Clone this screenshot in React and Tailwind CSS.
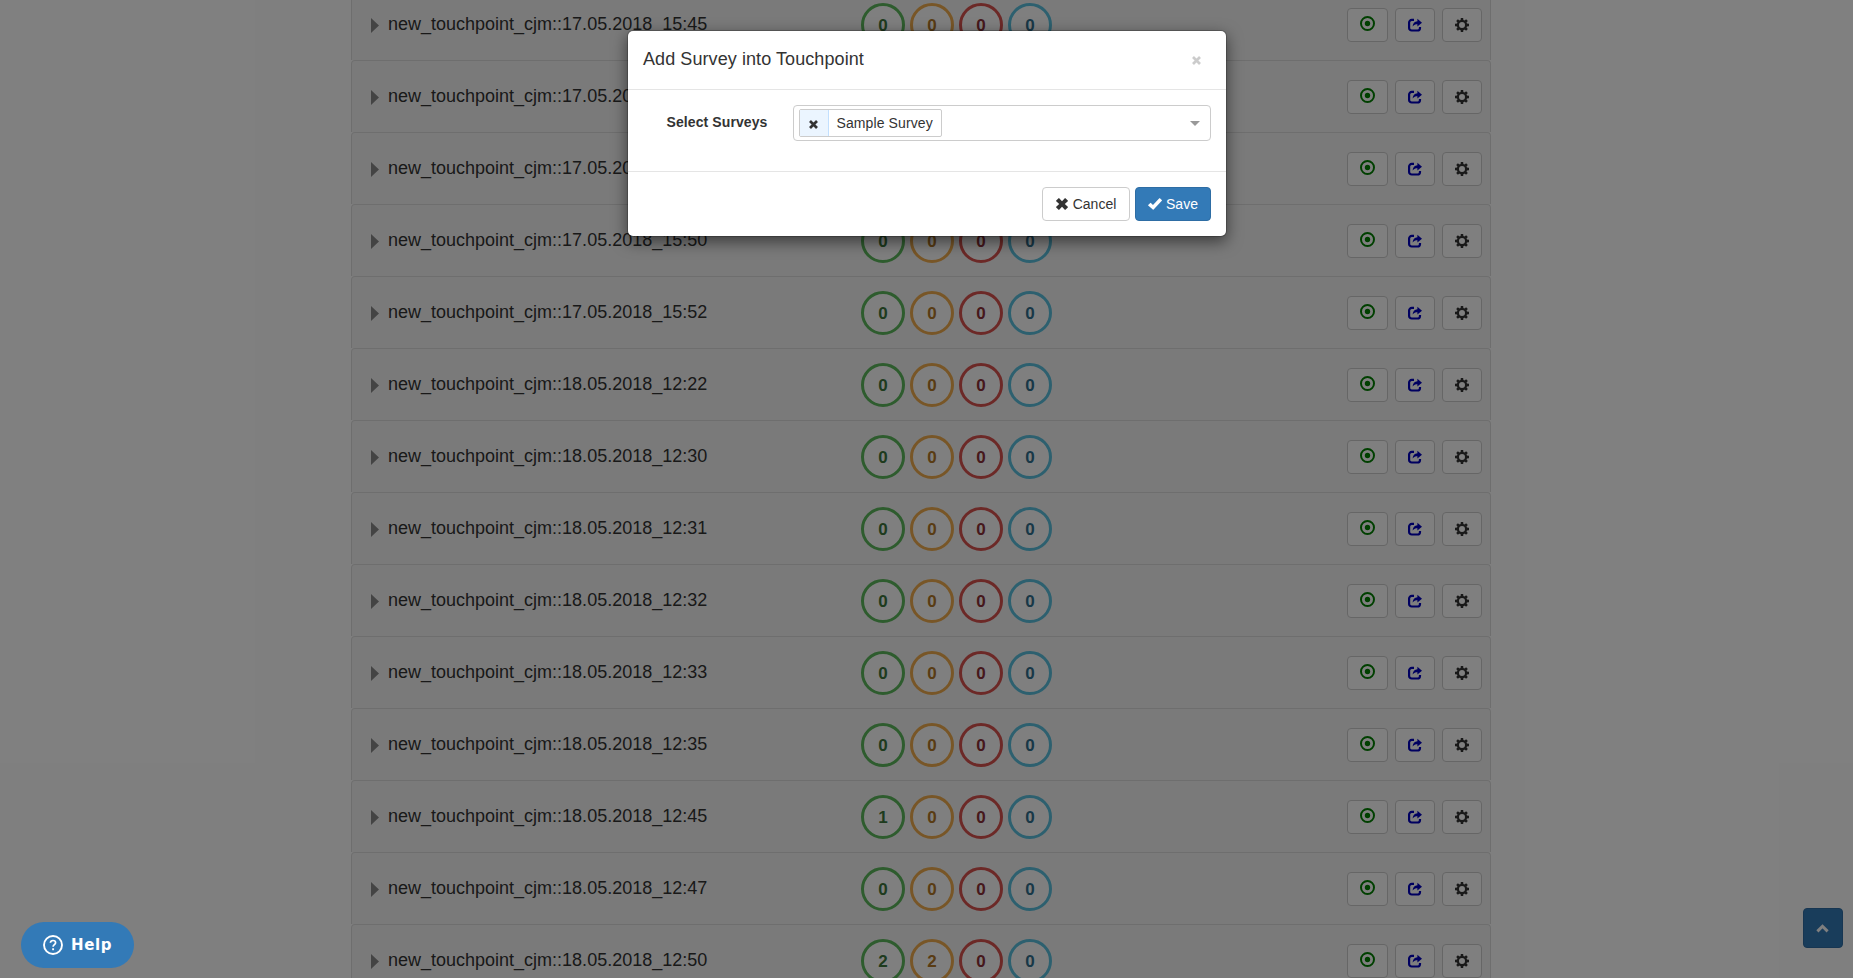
const rows = [
  ["new_touchpoint_cjm::17.05.2018_15:45", 0, 0],
  ["new_touchpoint_cjm::17.05.2018_15:46", 0, 0],
  ["new_touchpoint_cjm::17.05.2018_15:48", 0, 0],
  ["new_touchpoint_cjm::17.05.2018_15:50", 0, 0],
  ["new_touchpoint_cjm::17.05.2018_15:52", 0, 0],
  ["new_touchpoint_cjm::18.05.2018_12:22", 0, 0],
  ["new_touchpoint_cjm::18.05.2018_12:30", 0, 0],
  ["new_touchpoint_cjm::18.05.2018_12:31", 0, 0],
  ["new_touchpoint_cjm::18.05.2018_12:32", 0, 0],
  ["new_touchpoint_cjm::18.05.2018_12:33", 0, 0],
  ["new_touchpoint_cjm::18.05.2018_12:35", 0, 0],
  ["new_touchpoint_cjm::18.05.2018_12:45", 1, 0],
  ["new_touchpoint_cjm::18.05.2018_12:47", 0, 0],
  ["new_touchpoint_cjm::18.05.2018_12:50", 2, 2],
];

const badgeStyles = [
  "border-[#5cb85c] text-[#3c763d]",
  "border-[#f0ad4e] text-[#b27828]",
  "border-[#d9534f] text-[#8c3038]",
  "border-[#5bc0de] text-[#31708f]",
];

function TargetIcon() {
  return (
    <svg className="mb-[3px] size-[15px]" viewBox="0 0 15 15">
      <circle cx="7.5" cy="7.5" r="6.5" fill="none" stroke="#008000" strokeWidth="2" />
      <circle cx="7.5" cy="7.5" r="2.7" fill="#008000" />
    </svg>
  );
}

function ShareIcon() {
  return (
    <svg className="mb-px h-[14px] w-[14px]" viewBox="0 0 14 14">
      <path d="M6 1.900H3.700A2.600 2.600 0 0 0 1.100 4.500v5.400A2.600 2.600 0 0 0 3.700 12.500h5.700A2.600 2.600 0 0 0 12 9.900V9" fill="none" stroke="#0000c0" strokeWidth="2.200" />
      <path d="M9.400 .8 14 4.800 9.400 8.600V6.300C7.500 6.300 5.900 6.900 4.600 8.600 4.800 5.300 6.500 3.400 9.400 3.200Z" fill="#0000c0" />
    </svg>
  );
}

function CogIcon() {
  return (
    <svg className="mb-px size-[14px]" viewBox="-7 -7 14 14" fill="#333">
      <circle r="4.100" fill="none" stroke="#333" strokeWidth="2.200" />
      {[0, 45, 90, 135, 180, 225, 270, 315].map((a) => (
        <path key={a} d="M-1.400 -4.600-1.200 -7h2.400L1.400 -4.600Z" transform={`rotate(${a})`} />
      ))}
    </svg>
  );
}

function CrossIcon({ className }) {
  return (
    <svg className={className} viewBox="0 0 12 12" fill="currentColor">
      <path d="M.2 2.600 2.600.2Q2.900 0 3.200.2L6 3.200 8.800.2Q9.100 0 9.400.2l2.400 2.400q.3.300 0 .6L8.800 6l3 2.800q.3.300 0 .6L9.400 11.800q-.3.300-.6 0L6 8.800 3.200 11.800q-.3.300-.6 0L.2 9.400q-.3-.3 0-.6L3.200 6 .2 3.200q-.3-.3 0-.6Z" />
    </svg>
  );
}

function SmallCrossIcon({ className }) {
  return (
    <svg className={className} viewBox="0 0 9 9" fill="none" stroke="currentColor">
      <path d="M1 1 8 8M8 1 1 8" strokeWidth="2.700" />
    </svg>
  );
}

function CheckIcon() {
  return (
    <svg className="h-[12px] w-[14px]" viewBox="0 0 14 12" fill="white">
      <path d="M.2 7 2.300 4.900q.3-.3.600 0L5 6.900 11.300.3q.3-.3.600 0l1.900 1.800q.3.300 0 .6L5.600 11.500q-.4.400-.8 0L.2 7.600q-.3-.3 0-.6Z" />
    </svg>
  );
}

const toolButton =
  "flex h-[34px] items-center justify-center rounded-[4px] border border-[#ccc] bg-white";

function Row({ data }) {
  const [name, first, second] = data;
  return (
    <div className="flex h-[72px] shrink-0 items-start rounded-t-[4px] border-x border-t border-[#ddd] bg-[#f5f5f5]">
      <div className="flex w-[509px] items-start pl-[19px]">
        <svg className="mt-[29px] h-[15px] w-[8px]" viewBox="0 0 8 15">
          <path d="M0 0 8 7.500 0 15Z" fill="#888" />
        </svg>
        <span className="ml-[9px] mt-[25px] text-[18px] leading-[20px] text-[#333]">{name}</span>
      </div>
      <div className="mt-[14px] flex gap-[5px]">
        {[first, second, 0, 0].map((n, i) => (
          <span
            key={i}
            className={`flex size-[44px] items-center justify-center rounded-full border-[3px] bg-white pt-px text-[17px] font-bold leading-[20px] ${badgeStyles[i]}`}
          >
            {n}
          </span>
        ))}
      </div>
      <div className="ml-auto mr-[8px] mt-[19px] flex gap-[7px]">
        <button className={`w-[41px] ${toolButton}`}><TargetIcon /></button>
        <button className={`w-[40px] ${toolButton}`}><ShareIcon /></button>
        <button className={`w-[40px] ${toolButton}`}><CogIcon /></button>
      </div>
    </div>
  );
}

export default function App() {
  return (
    <div className="relative h-[978px] w-full overflow-hidden bg-white font-['Liberation_Sans',Arial,sans-serif] text-[14px] leading-[20px] text-[#333]">
      <main className="-mt-[12px] ml-[351px] flex w-[1140px] flex-col">
        {rows.map((r) => (
          <Row key={r[0]} data={r} />
        ))}
      </main>

      <button className="absolute bottom-[30px] right-[10px] flex size-[40px] items-center justify-center rounded-[4px] border border-[#2e6da4] bg-[#337ab7] pr-px">
        <svg className="h-[9px] w-[13px]" viewBox="0 0 13 9">
          <path d="M1.400 7.400 6.500 2.300l5.100 5.100" fill="none" stroke="#fff" strokeWidth="3" />
        </svg>
      </button>

      <div className="absolute inset-0 flex items-start justify-center bg-black/50 pt-[30px]">
        <section className="w-[600px] rounded-[6px] border border-black/20 bg-white bg-clip-padding shadow-[0_5px_15px_rgba(0,0,0,0.5)]">
          <header className="flex h-[59px] items-start justify-between border-b border-[#e5e5e5] px-[15px]">
            <h4 className="ml-[0.5px] mt-[18px] text-[18px] leading-[20px] tracking-[0.08px]">Add Survey into Touchpoint</h4>
            <button className="mr-[10px] mt-[25px] text-[#ccc]"><SmallCrossIcon className="size-[9px]" /></button>
          </header>
          <div className="flex h-[81px] items-start px-[15px] pt-[15px]">
            <label className="w-[125px] text-right font-bold leading-[34px] tracking-[0.1px]">Select Surveys</label>
            <div className="ml-[25px] flex h-[36px] flex-1 items-center rounded-[4px] border border-[#ccc] pl-[5px] pr-[10px]">
              <div className="flex h-[28px] items-center rounded-[2px] border border-[#ccc]">
                <span className="flex h-[26px] w-[29px] items-center justify-center border-r border-[#c2e0ff] bg-[#ebf5ff] pt-[3px]">
                  <SmallCrossIcon className="size-[9px]" />
                </span>
                <span className="px-[8px] tracking-[0.1px]">Sample Survey</span>
              </div>
              <svg className="ml-auto h-[5px] w-[10px]" viewBox="0 0 10 5">
                <path d="M0 0H10L5 5Z" fill="#999" />
              </svg>
            </div>
          </div>
          <footer className="flex h-[65px] justify-end gap-[5px] border-t border-[#e5e5e5] px-[15px] pt-[15px]">
            <button className="flex h-[34px] w-[88px] items-center justify-center gap-[5px] rounded-[4px] border border-[#ccc] bg-white pl-px">
              <CrossIcon className="mb-px size-[12px]" />Cancel
            </button>
            <button className="flex h-[34px] w-[76px] items-center justify-center gap-[4px] rounded-[4px] border border-[#2e6da4] bg-[#337ab7] pl-px text-white">
              <CheckIcon />Save
            </button>
          </footer>
        </section>
      </div>

      <button className="absolute bottom-[10px] left-[21px] flex h-[46px] w-[113px] items-center rounded-full bg-[#337ab7] pl-[22px] text-white">
        <svg className="size-[20px]" viewBox="0 0 20 20" fill="none" stroke="white">
          <circle cx="10" cy="10" r="9" strokeWidth="1.900" />
          <path d="M7.400 7.800C7.500 6.300 8.500 5.500 10 5.500c1.500 0 2.600.9 2.600 2.200 0 1.900-2.500 2-2.500 4.100" strokeWidth="1.700" />
          <path d="M10.100 13.300v1.900" strokeWidth="1.900" />
        </svg>
        <span className="ml-[8px] font-['DejaVu_Sans',sans-serif] text-[15px] font-bold tracking-[0.6px]">Help</span>
      </button>
    </div>
  );
}
